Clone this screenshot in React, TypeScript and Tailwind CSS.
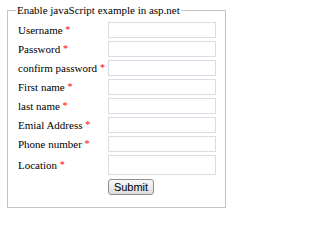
const fields = [
  { label: "Username", tall: false },
  { label: "Password", tall: false },
  { label: "confirm password", tall: false },
  { label: "First name", tall: false },
  { label: "last name", tall: false },
  { label: "Emial Address", tall: false },
  { label: "Phone number", tall: false },
  { label: "Location", tall: true },
];

export default function App() {
  return (
    <div className="w-[234px] h-[216px] bg-white pt-[4px] pl-[7px] font-['Liberation_Serif',serif] text-[11px] text-black">
      <fieldset className="w-[219px] border border-[#c4c4c4] pl-[10px] pr-[9px] pt-[5px] pb-[11px]">
        <legend className="-ml-[2px] px-[1px] leading-[13px] text-[11px]">Enable javaScript example in asp.net</legend>
        <div className="grid grid-cols-[90px_108px] gap-y-[3px] items-center">
          {fields.map((f) => (
            <div key={f.label} className="contents">
              <div className="leading-[13px] whitespace-nowrap">
                {f.label} <span className="text-[#ff0000] text-[10px] relative -top-[1px]">*</span>
              </div>
              <input
                type="text"
                className={`${f.tall ? "h-[20px]" : "h-[16px]"} w-[108px] border border-[#d9dde3] bg-white outline-none`}
              />
            </div>
          ))}
          <div />
          <div className="pt-[1px]">
            <button
              type="button"
              className="h-[16px] w-[46px] rounded-[3px] border border-[#8e8e8e] bg-gradient-to-b from-[#f8f8f8] to-[#dcdcdc] font-['Liberation_Sans',sans-serif] text-[11px] leading-[14px] text-black"
            >
              Submit
            </button>
          </div>
        </div>
      </fieldset>
    </div>
  );
}
